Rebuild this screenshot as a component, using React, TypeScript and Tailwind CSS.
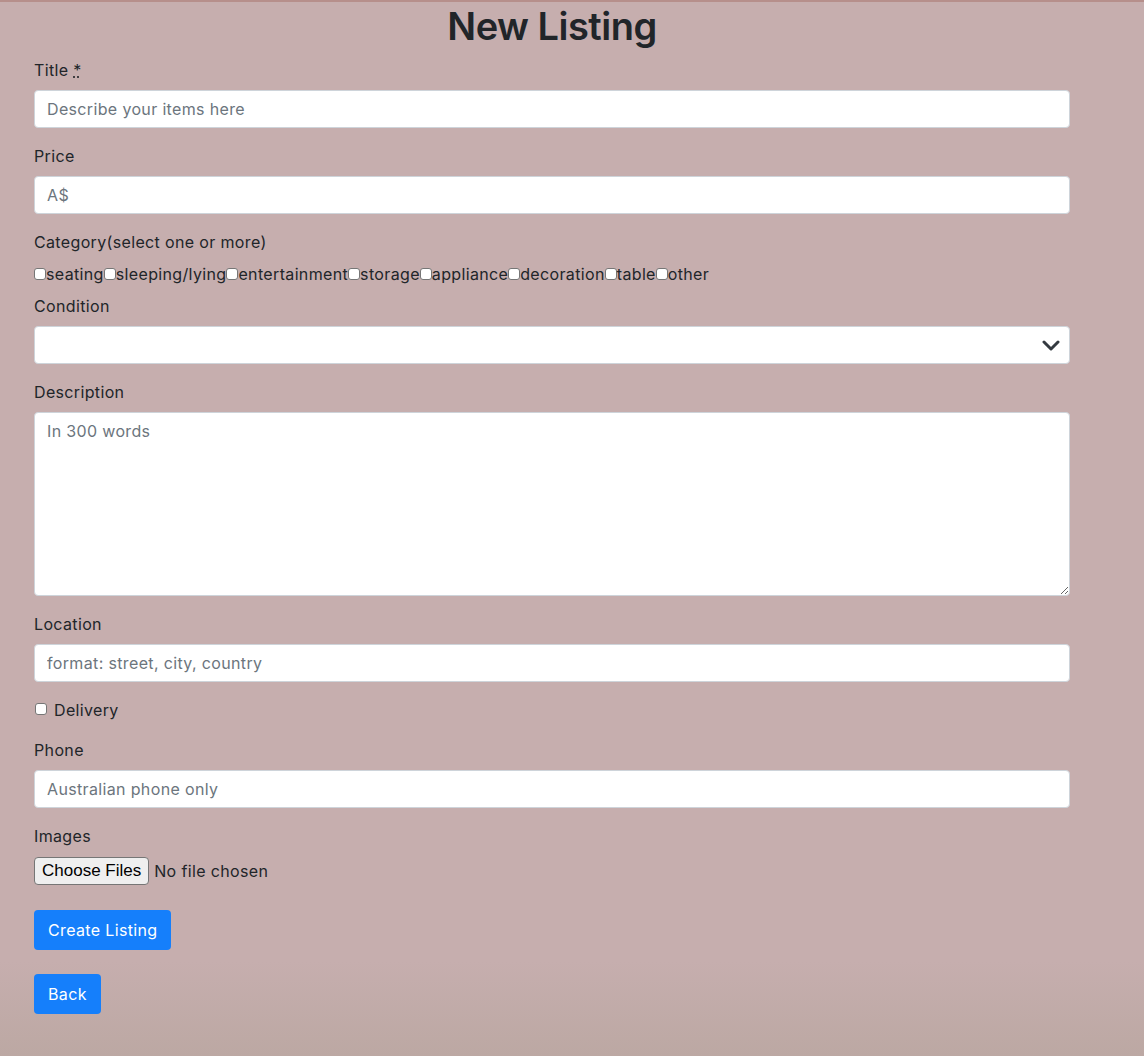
import { useState } from 'react'

// categorias del listado
const categories = [
  'seating',
  'sleeping/lying',
  'entertainment',
  'storage',
  'appliance',
  'decoration',
  'table',
  'other'
]

function Field({ label, children, className = 'mb-4' }: { label: React.ReactNode; children: React.ReactNode; className?: string }) {
  return (
    <div className={className}>
      <label className="block mb-2 leading-6">{label}</label>
      {children}
    </div>
  )
}

const inputClass =
  'block w-full h-[38px] px-3 bg-white border border-[#ced4da] rounded-[4px] text-base tracking-[0.35px] text-[#495057] placeholder:text-[#6c757d] outline-none'

const boxClass =
  'appearance-none m-0 w-3 h-3 shrink-0 bg-white border-[1.5px] border-[#767676] rounded-[3px]'

export default function App() {
  const [checked, setChecked] = useState<string[]>([])

  function toggle(cat: string) {
    setChecked(checked.includes(cat) ? checked.filter((c) => c !== cat) : [...checked, cat])
  }

  return (
    <div
      className="min-h-screen border-t-2 border-[#b68f8b] bg-[linear-gradient(to_bottom,#c6aeae_0%,#c6aeae_91%,#bca8a3_100%)] text-[#212529] text-base tracking-[0.35px]"
      style={{ fontFamily: 'Inter, "Liberation Sans", sans-serif' }}
    >
      <div className="w-[1036px] ml-[34px] pb-[40px]">
        <h1 className="text-[38px] leading-[48px] font-semibold text-center mb-2 tracking-[-0.5px]">New Listing</h1>

        <Field
          label={
            <>
              Title{' '}
              <abbr title="required" className="underline decoration-dotted">
                *
              </abbr>
            </>
          }
        >
          <input className={inputClass} placeholder="Describe your items here" />
        </Field>

        <Field label="Price">
          <input className={inputClass} placeholder="A$" />
        </Field>

        <Field label="Category(select one or more)" className="mb-2">
          <div className="flex items-center h-6">
            {categories.map((cat) => (
              <label key={cat} className="flex items-center">
                <input
                  type="checkbox"
                  className={boxClass}
                  checked={checked.includes(cat)}
                  onChange={() => toggle(cat)}
                />
                <span>{cat}</span>
              </label>
            ))}
          </div>
        </Field>

        <Field label="Condition">
          <div className="relative">
            <select className={inputClass + ' appearance-none'} defaultValue="">
              <option value=""></option>
              <option>New</option>
              <option>Used - like new</option>
              <option>Used - good</option>
              <option>Used - fair</option>
            </select>
            <svg
              className="absolute right-[10px] top-[14px] pointer-events-none"
              width="18"
              height="11"
              viewBox="0 0 18 11"
            >
              <path d="M2 2l7 7 7-7" fill="none" stroke="#343a40" strokeWidth="3" strokeLinecap="round" strokeLinejoin="round" />
            </svg>
          </div>
        </Field>

        <Field label="Description">
          <textarea
            className="block w-full h-[184px] px-3 py-[6px] bg-white border border-[#ced4da] rounded-[4px] text-base leading-6 tracking-[0.35px] placeholder:text-[#6c757d] outline-none"
            placeholder="In 300 words"
          />
        </Field>

        <Field label="Location">
          <input className={inputClass} placeholder="format: street, city, country" />
        </Field>

        <div className="mb-4 flex h-6 leading-6">
          <input type="checkbox" className={boxClass + ' mt-[5px] ml-[1px]'} />
          <label className="ml-[7px]">Delivery</label>
        </div>

        <Field label="Phone">
          <input className={inputClass} placeholder="Australian phone only" />
        </Field>

        <Field label="Images" className="mb-6">
          <div className="flex items-center h-[30px]">
            <span
              className="h-[28px] px-[7px] flex items-center bg-[#efefef] border-[1.5px] border-[#767676] rounded-[4px] text-black tracking-normal"
              style={{ fontFamily: '"Liberation Sans", Arial, sans-serif', fontSize: '17px' }}
            >
              Choose Files
            </span>
            <span className="ml-[5px] text-[#212529]">No file chosen</span>
          </div>
        </Field>

        <button className="block h-10 px-[14px] bg-[#157ffb] text-white rounded-[4px] mb-6">Create Listing</button>
        <button className="block h-10 px-[14px] bg-[#157ffb] text-white rounded-[4px]">Back</button>
      </div>
    </div>
  )
}
